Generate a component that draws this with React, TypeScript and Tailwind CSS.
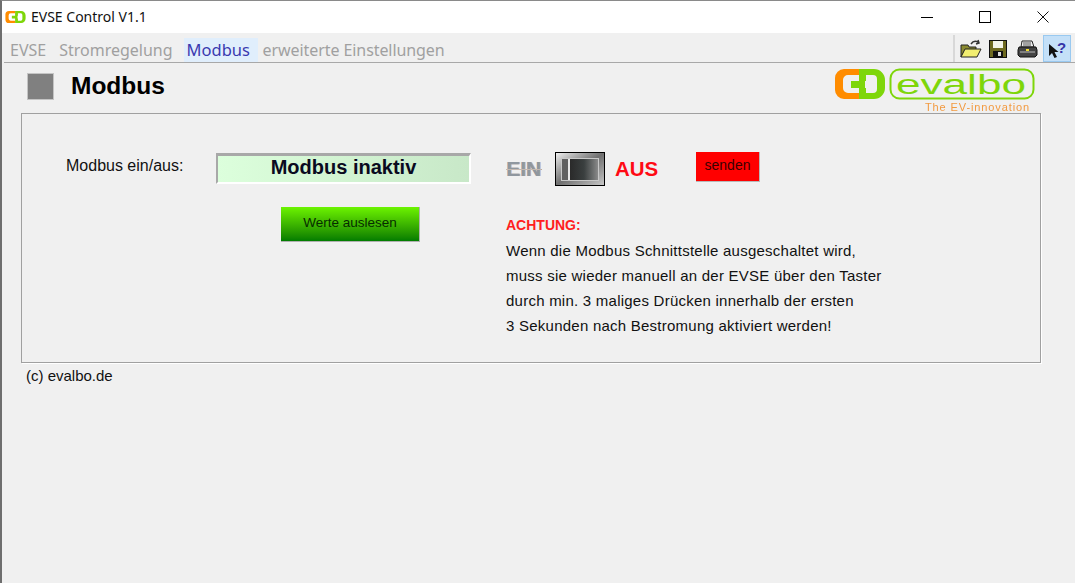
const sans = 'font-["Liberation_Sans",Arial,sans-serif]';

function PlugMark({ className }: { className?: string }) {
  return (
    <svg viewBox="0 0 52 32" className={className}>
      <path d="M25 1H10a9 9 0 0 0-9 9v12a9 9 0 0 0 9 9h15v-6H14a5 5 0 0 1-5-5v-8a5 5 0 0 1 5-5h11z" fill="#ff8c00" />
      <path d="M25 1h15a11 11 0 0 1 11 11v8a11 11 0 0 1-11 11H25v-11h-8v-7h8zM32 7v6h-1v7h1v5h7a4 4 0 0 0 4-4V11a4 4 0 0 0-4-4z" fill="#7ed60a" fillRule="evenodd" />
    </svg>
  );
}

function Logo() {
  return (
    <div className="flex w-[200px] flex-col items-start">
      <div className="flex h-[32px] items-center">
        <PlugMark className="h-[32px] w-[52px]" />
        <svg viewBox="0 0 146 32" className="ml-[3px] h-[32px] w-[146px]">
          <rect x="1.500" y="1.500" width="143" height="29" rx="9" fill="none" stroke="#7ed60a" strokeWidth="2" />
          <text x="7" y="26" textLength="130" lengthAdjust="spacingAndGlyphs" fontFamily="Liberation Sans" fontSize="27" fill="#7ed60a">
            evalbo
          </text>
        </svg>
      </div>
      <span className={`${sans} ml-[91px] mt-[2px] text-[11px] leading-[11px] tracking-[0.9px] whitespace-nowrap text-[#f29a40] blur-[0.4px]`}>
        The EV-innovation
      </span>
    </div>
  );
}

function ToolIcons() {
  return (
    <div className="mr-[1px] flex h-[27px] items-center border-l-2 border-[#d8d8d8] pl-[4px]">
      {/* open */}
      <svg viewBox="0 0 22 20" className="ml-[1px] h-[20px] w-[22px]">
        <path d="M1 6h7l1 2h7v3H5L1 18z" fill="#8a8a30" stroke="#222" />
        <path d="M5 10h16l-4 8H1z" fill="#f2ee70" stroke="#222" />
        <path d="M11 5c2-3 5-3 7-2M18 1l1 3-3 1" fill="none" stroke="#333" strokeWidth="1.500" />
      </svg>
      {/* save */}
      <svg viewBox="0 0 18 18" className="ml-[7px] h-[18px] w-[18px]">
        <rect x="0.500" y="0.500" width="17" height="17" fill="#6e6a20" stroke="#111" />
        <rect x="4" y="1" width="10" height="7" fill="#f4f4e8" />
        <rect x="4" y="11" width="10" height="6" fill="#111" />
        <rect x="9" y="12" width="3" height="4" fill="#ddd" />
      </svg>
      {/* print */}
      <svg viewBox="0 0 21 18" className="ml-[10px] h-[18px] w-[21px]">
        <path d="M5 1h10l2 6H4z" fill="#eee" stroke="#222" />
        <path d="M6 3h8M6 5h8" stroke="#555" />
        <path d="M2 7h17l1 3v5l-2 2H3l-2-2v-5z" fill="#444" stroke="#111" />
        <path d="M3 12h15" stroke="#bbb" />
        <rect x="9" y="9" width="3" height="2" fill="#f2e030" />
      </svg>
      {/* help */}
      <div className="ml-[5px] flex h-[27px] w-[28px] items-center justify-center border border-[#99c9f0] bg-[#c4e0f8]">
        <svg viewBox="0 0 20 20" className="h-[20px] w-[20px]">
          <path d="M2 5l0 12 3-3 2.500 5 2.500-1-2.500-5h4z" fill="#111" />
          <text x="10" y="14" fontFamily="Liberation Sans" fontWeight="700" fontSize="15" fill="#3535a8">?</text>
        </svg>
      </div>
    </div>
  );
}

function ToggleSwitch() {
  return (
    <div className="flex h-[34px] w-[50px] items-center justify-center border border-black bg-gradient-to-br from-[#f0f0f0] via-[#707070] to-[#c8c8c8]">
      <div className="flex h-[23px] w-[38px] border border-[#c8c8c8] bg-[#2a2a2a]">
        <div className="w-[8px] border-r-2 border-[#e8e8e8] bg-[#606060]" />
        <div className="flex-1 bg-gradient-to-r from-[#2a2a2a] via-[#3a3f3f] to-[#8a8a8a]" />
      </div>
    </div>
  );
}

export default function App() {
  return (
    <div className="h-[586px] w-[1075px] overflow-hidden bg-white">
      <div className={`${sans} flex h-[583px] flex-col overflow-hidden border-t border-l-2 border-t-[#8a8a8a] border-l-[#6e6e6e] bg-[#f0f0f0] text-[15px] text-[#111]`}>
        {/* Title bar */}
        <div className="flex h-[32px] shrink-0 items-center bg-white pl-[3px]">
          <PlugMark className="h-[14px] w-[21px]" />
          <span className="mb-[1px] ml-[5px] font-['Noto_Sans',sans-serif] text-[14px] text-[#111]">EVSE Control V1.1</span>
          <div className="mr-[9px] ml-auto flex h-full items-center">
            <div className="flex h-full w-[46px] items-center justify-center">
              <div className="h-px w-[12px] bg-black" />
            </div>
            <div className="ml-[12px] flex h-full w-[46px] items-center justify-center">
              <div className="h-[12px] w-[12px] border border-black" />
            </div>
            <div className="ml-[12px] flex h-full w-[46px] items-center justify-center">
              <svg viewBox="0 0 12 12" className="h-[12px] w-[12px]">
                <path d="M0.500 0.500l11 11M11.500 0.500l-11 11" stroke="#111" strokeWidth="1" />
              </svg>
            </div>
          </div>
        </div>

        {/* Menu bar */}
        <div className="ml-[2px] flex h-[30px] shrink-0 items-end justify-between border-b border-[#a8a8a8] pr-[3px]">
          <div className="flex h-[24px] items-center font-['Noto_Sans',sans-serif] text-[16px] text-[#a0a0a0]">
            <span className="ml-[6px]">EVSE</span>
            <span className="ml-[13px]">Stromregelung</span>
            <span className="ml-[11px] flex h-full w-[74px] items-center bg-[#e0eefc] pl-[3px] text-[16.500px] text-[#3a3ab0]">Modbus</span>
            <span className="ml-[5px] tracking-[-0.08px]">erweiterte Einstellungen</span>
          </div>
          <ToolIcons />
        </div>

        {/* Header */}
        <div className="flex h-[50px] shrink-0 items-start">
          <div className="ml-[25px] mt-[10px] h-[27px] w-[27px] border border-[#c4c4c4] bg-[#808080]" />
          <h1 className="ml-[17px] mt-[8px] text-[24.500px] leading-[30px] font-bold text-black">Modbus</h1>
          <div className="ml-[669px] mt-[5px]">
            <Logo />
          </div>
        </div>

        {/* Panel */}
        <div className="ml-[19px] flex h-[250px] w-[1020px] shrink-0 border border-[#a0a0a0] pt-[38px] shadow-[1px_1px_0_#ffffff]">
          <div className="w-[484px] shrink-0">
            <div className="flex h-[32px] items-center">
              <span className="mb-[4px] ml-[44px] w-[150px] text-[16px]">Modbus ein/aus:</span>
              <div className="flex h-[31px] w-[255px] items-center justify-center border-2 border-t-[3px] border-white border-t-[#a8a8a8] border-l-[#a8a8a8] bg-gradient-to-r from-[#dcffdc] to-[#c8e8c8] pb-[3px] text-[20px] font-bold text-[#0a0a20]">
                Modbus inaktiv
              </div>
            </div>
            <div className="ml-[259px] mt-[23px] flex h-[35px] w-[139px] items-center justify-center border-r border-b border-[#b0b0b0] bg-gradient-to-b from-[#6cf400] to-[#007c00] pb-[2px] text-[13.500px] text-[#062c00]">
              Werte auslesen
            </div>
          </div>

          <div className="flex flex-col">
            <div className="flex h-[34px] items-center">
              <span className="w-[49px] text-[21px] font-bold text-[#8f979f] line-through decoration-[#c4b8b0] decoration-1 [text-shadow:1px_0_0_#b8a8a0]">EIN</span>
              <ToggleSwitch />
              <span className="ml-[10px] w-[81px] text-[20.500px] font-bold text-[#ff0a14]">AUS</span>
              <div className="flex h-[30px] w-[64px] items-center justify-center self-start border-r border-b border-[#b8b8b8] bg-[#ff0000] pb-[2px] text-[14px] text-[#3a0000]">
                senden
              </div>
            </div>
            <div className="mt-[27px] leading-[25px] tracking-[0.24px]">
              <div className="text-[14px] font-bold tracking-normal text-[#ff2020]">ACHTUNG:</div>
              <div>Wenn die Modbus Schnittstelle ausgeschaltet wird,</div>
              <div>muss sie wieder manuell an der EVSE über den Taster</div>
              <div>durch min. 3 maliges Drücken innerhalb der ersten</div>
              <div>3 Sekunden nach Bestromung aktiviert werden!</div>
            </div>
          </div>
        </div>

        <div className="ml-[24px] mt-[2px]">(c) evalbo.de</div>
      </div>
    </div>
  );
}
